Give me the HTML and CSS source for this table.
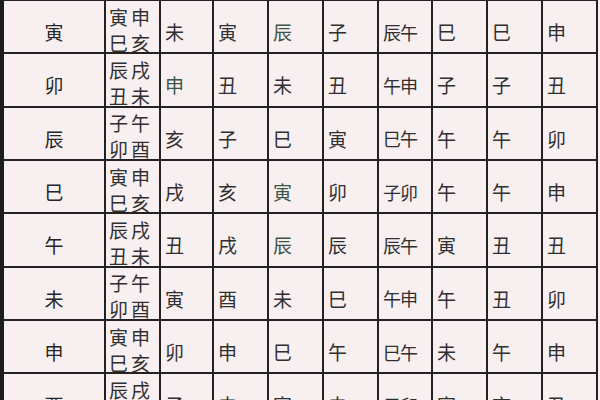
FILE: index.html
```html
<!DOCTYPE html>
<html lang="zh">
<head>
<meta charset="utf-8">
<title>地支表</title>
<link rel="stylesheet" href="styles.css">
</head>
<body>
<div class="grid">
  <div class="c head">寅</div><div class="c pair">寅申<br>巳亥</div><div class="c">未</div><div class="c">寅</div><div class="c g">辰</div><div class="c">子</div><div class="c two">辰午</div><div class="c">巳</div><div class="c">巳</div><div class="c">申</div>
  <div class="c head">卯</div><div class="c pair">辰戌<br>丑未</div><div class="c g">申</div><div class="c">丑</div><div class="c">未</div><div class="c">丑</div><div class="c two">午申</div><div class="c">子</div><div class="c">子</div><div class="c">丑</div>
  <div class="c head">辰</div><div class="c pair">子午<br>卯酉</div><div class="c">亥</div><div class="c">子</div><div class="c">巳</div><div class="c">寅</div><div class="c two">巳午</div><div class="c">午</div><div class="c">午</div><div class="c">卯</div>
  <div class="c head">巳</div><div class="c pair">寅申<br>巳亥</div><div class="c">戌</div><div class="c">亥</div><div class="c g">寅</div><div class="c">卯</div><div class="c two">子卯</div><div class="c">午</div><div class="c">午</div><div class="c">申</div>
  <div class="c head">午</div><div class="c pair">辰戌<br>丑未</div><div class="c">丑</div><div class="c">戌</div><div class="c g">辰</div><div class="c">辰</div><div class="c two">辰午</div><div class="c">寅</div><div class="c">丑</div><div class="c">丑</div>
  <div class="c head">未</div><div class="c pair">子午<br>卯酉</div><div class="c">寅</div><div class="c">酉</div><div class="c">未</div><div class="c">巳</div><div class="c two">午申</div><div class="c">午</div><div class="c">丑</div><div class="c">卯</div>
  <div class="c head">申</div><div class="c pair">寅申<br>巳亥</div><div class="c">卯</div><div class="c">申</div><div class="c">巳</div><div class="c">午</div><div class="c two">巳午</div><div class="c">未</div><div class="c">午</div><div class="c">申</div>
  <div class="c head">酉</div><div class="c pair">辰戌<br>丑未</div><div class="c">子</div><div class="c">未</div><div class="c">寅</div><div class="c">未</div><div class="c two">子卯</div><div class="c">寅</div><div class="c">亥</div><div class="c">丑</div>
</div>
</body>
</html>
```
FILE: styles.css
```css
html, body {
  margin: 0;
  padding: 0;
  background: #f7eef0;
  overflow: hidden;
}
body {
  width: 600px;
  height: 400px;
  font-family: "Noto Sans CJK SC", "Noto Sans CJK TC", sans-serif;
  color: #303030;
}
.grid {
  width: 592px;
  display: grid;
  grid-template-columns: 100px 53px 51px 53px 53px 53px 52px 53px 53px 53px;
  grid-auto-rows: 51.33px;
  gap: 2px;
  background: #222;
  border-left: 4px solid #1c1c1c;
  border-right: 2px solid #222;
  border-top: 1px solid #222;
}
.c {
  background: #f8eff1;
  display: flex;
  align-items: center;
  padding: 10px 0 0 4px;
  box-sizing: border-box;
  font-size: 19px;
  line-height: 1;
}
.head {
  justify-content: center;
  padding-left: 0;
  color: #262626;
}
.pair {
  padding: 6px 0 0 3px;
  font-size: 19px;
  line-height: 26px;
  letter-spacing: 3px;
  white-space: nowrap;
}
.two {
  font-size: 18px;
  letter-spacing: -1px;
  padding-left: 4px;
  white-space: nowrap;
}
.g {
  color: #3b5547;
}
```
